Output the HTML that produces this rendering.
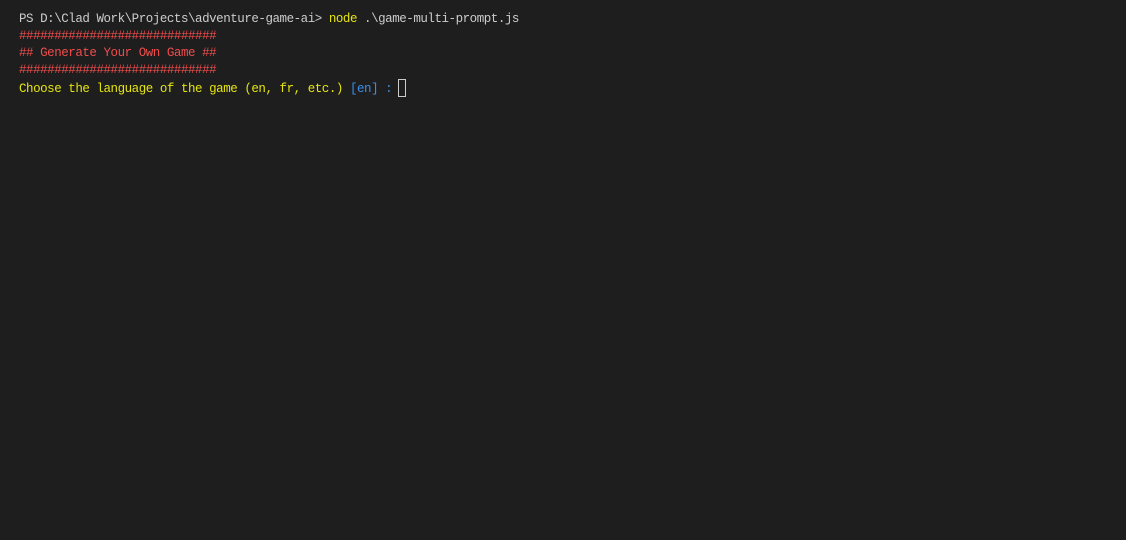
<!DOCTYPE html>
<html><head><style>
html,body{margin:0;background:#1e1e1e;width:1126px;height:540px;overflow:hidden}
pre{margin:0;position:absolute;left:19px;top:11px;font-family:"Liberation Mono",monospace;font-size:12.5px;letter-spacing:-0.46px;line-height:17px;color:#cccccc;white-space:pre}
.r{color:#f14c4c}.y{color:#e5e510}.b{color:#3b8eea}
.cur{display:inline-block;width:6px;height:16px;border:1px solid #cccccc;vertical-align:-5px;margin-left:-1px}
</style></head><body>
<pre>PS D:\Clad Work\Projects\adventure-game-ai&gt; <span class="y">node</span> .\game-multi-prompt.js
<span class="r">############################</span>
<span class="r">## Generate Your Own Game ##</span>
<span class="r">############################</span>
<span class="y">Choose the language of the game (en, fr, etc.)</span> <span class="b">[en] :</span> <span class="cur"></span></pre>
</body></html>
